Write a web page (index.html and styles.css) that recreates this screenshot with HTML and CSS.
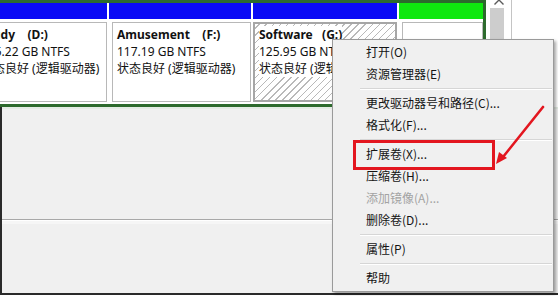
FILE: index.html
```html
<!DOCTYPE html>
<html lang="zh-CN">
<head>
<meta charset="utf-8">
<title>磁盘管理</title>
<link rel="stylesheet" href="styles.css">
</head>
<body>
<div class="win">
  <div class="disks">
    <div class="ext">
      <div class="col c1">
        <div class="hdr blue"></div>
        <div class="body">
          <div class="box">
            <div class="ln b">Study&nbsp;&nbsp;&nbsp;&nbsp;(D:)</div>
            <div class="ln">195.22 GB NTFS</div>
            <div class="ln">状态良好 (逻辑驱动器)</div>
          </div>
        </div>
      </div>
      <div class="col c2">
        <div class="hdr blue"></div>
        <div class="body">
          <div class="box">
            <div class="ln b">Amusement&nbsp;&nbsp;&nbsp;&nbsp;(F:)</div>
            <div class="ln">117.19 GB NTFS</div>
            <div class="ln">状态良好 (逻辑驱动器)</div>
          </div>
        </div>
      </div>
      <div class="col c3">
        <div class="hdr blue"></div>
        <div class="body sel">
          <div class="box hatch">
            <div class="ln b"><span class="bg">Software&nbsp;&nbsp;&nbsp;(G:)</span></div>
            <div class="ln"><span class="bg">125.95 GB NTFS</span></div>
            <div class="ln"><span class="bg">状态良好 (逻辑驱动器)</span></div>
          </div>
        </div>
      </div>
      <div class="col c4">
        <div class="hdr green"></div>
        <div class="body">
          <div class="box"></div>
        </div>
      </div>
    </div>
    <div class="scroll">
      <svg class="up" width="12" height="6" viewBox="0 0 12 6"><polyline points="1.5,5.5 6,1 10.5,5.5" fill="none" stroke="#5a5a5a" stroke-width="1.4"/></svg>
      <div class="thumb"></div>
    </div>
    <div class="vline"></div>
  </div>
  <div class="lower">
    <div class="pane top"></div>
    <div class="pane bottom"></div>
  </div>
</div>

<div class="menu">
  <div class="item">打开(O)</div>
  <div class="item">资源管理器(E)</div>
  <div class="sep"></div>
  <div class="item">更改驱动器号和路径(C)...</div>
  <div class="item">格式化(F)...</div>
  <div class="sep"></div>
  <div class="item">扩展卷(X)...</div>
  <div class="item">压缩卷(H)...</div>
  <div class="item dis">添加镜像(A)...</div>
  <div class="item">删除卷(D)...</div>
  <div class="sep"></div>
  <div class="item">属性(P)</div>
  <div class="sep"></div>
  <div class="item">帮助</div>
</div>

<div class="highlight"></div>
<svg class="arrow" width="558" height="296" viewBox="0 0 558 296">
  <line x1="543" y1="107" x2="503" y2="157" stroke="#e3161f" stroke-width="2.6" stroke-linecap="round"/>
  <polygon points="496,164 499,152 507,158" fill="#e3161f"/>
</svg>
</body>
</html>
```
FILE: styles.css
```css
* { box-sizing: border-box; }
html, body { margin: 0; padding: 0; }
body {
  width: 558px;
  height: 296px;
  overflow: hidden;
  position: relative;
  background: #fff;
  font-family: "Noto Sans", "Noto Sans CJK SC", sans-serif;
  color: #111;
}

.win { width: 558px; }

.disks {
  display: flex;
  height: 107px;
  background: #fff;
}

.ext {
  display: flex;
  gap: 2px;
  flex: none;
  width: 516px;
  height: 107px;
  margin-left: -30px;
  border: 3px solid #2d6a2d;
  background: #fff;
}

.col { display: flex; flex-direction: column; flex: none; }
.c1 { width: 134px; }
.c2 { width: 142px; }
.c3 { width: 144px; }
.c4 { width: 84px; }

.hdr { height: 16px; flex: none; }
.blue { background: #0a0af5; }
.green { background: #0fe80f; }

.body {
  margin-top: 3px;
  height: 80px;
  padding-left: 3px;
  display: flex;
}
.body.sel { padding-left: 0; }

.box {
  flex: 1;
  border: 1px solid #b8b8b8;
  padding: 3px 4px;
  overflow: hidden;
  white-space: nowrap;
  background: #fff;
}
.sel .box {
  border: 2px solid #a6a6a6;
  padding: 2px 4px;
}
.hatch {
  background: repeating-linear-gradient(-45deg, #fff 0 4px, #b9b9b9 4px 5px);
}

.ln { font-size: 12px; line-height: 17px; height: 17px; }
.b { font-weight: bold; }
.bg { background: #fff; }

.scroll {
  flex: none;
  width: 22px;
  margin-left: 4px;
  display: flex;
  flex-direction: column;
}
.up { display: block; margin-left: 3px; margin-top: -1px; }
.thumb {
  margin-top: 3px;
  width: 14px;
  flex: 1;
  background: #cdcdcd;
}
.vline { flex: none; width: 1px; background: #c4c4c4; margin-left: -1px; }

.lower {
  width: 558px;
  height: 188px;
  border-left: 2px solid #2a2a2a;
  border-bottom: 2px solid #2a2a2a;
  display: flex;
  flex-direction: column;
  background: #f0f0f0;
}
.pane { background: #f0f0f0; }
.pane.top {
  height: 112px;
  border-top: 2px solid #e4ece4;
}
.pane.bottom {
  flex: 1;
  border-top: 1px solid #a8a8a8;
  box-shadow: inset 0 1px 0 #fff, inset 0 4px 0 #f6f6f6;
}

.menu {
  position: absolute;
  left: 332px;
  top: 39px;
  width: 222px;
  height: 253px;
  background: #f0f0f0;
  border: 1px solid #9a9a9a;
  box-shadow: 2px 2px 3px rgba(0, 0, 0, 0.35);
  padding: 1px 0 2px 0;
  font-family: "Noto Sans CJK SC", sans-serif;
  font-size: 12px;
}
.item {
  height: 22px;
  line-height: 22px;
  padding-left: 33px;
  color: #141414;
  white-space: nowrap;
}
.item.dis { color: #a3a3a3; }
.sep {
  height: 7px;
  margin-left: 27px;
  margin-right: 1px;
  border-top: 3px solid transparent;
  background: linear-gradient(#d6d6d6 0 1px, #fff 1px 2px, transparent 2px) no-repeat;
  background-origin: padding-box;
}

.highlight {
  position: absolute;
  left: 353px;
  top: 140px;
  width: 142px;
  height: 30px;
  border: 3px solid #e3161f;
}

.arrow {
  position: absolute;
  left: 0;
  top: 0;
  pointer-events: none;
}
```
